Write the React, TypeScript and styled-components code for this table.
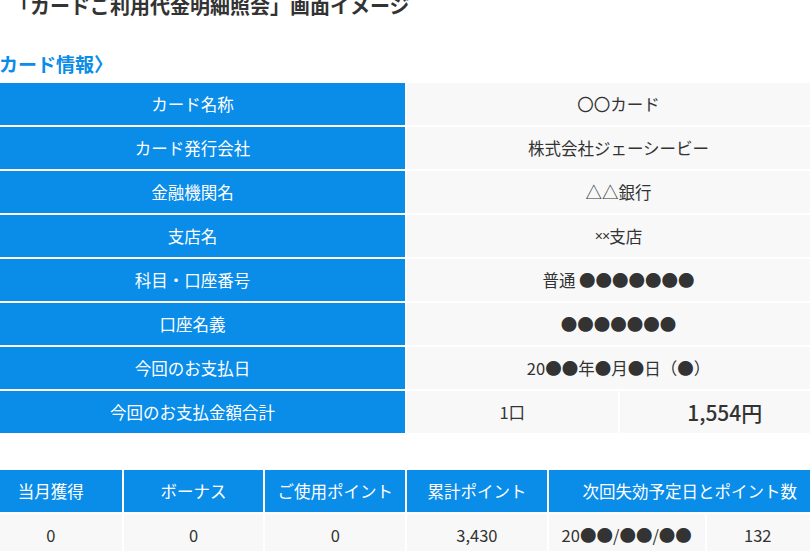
import * as React from 'react';
import styled, { createGlobalStyle } from 'styled-components';

const GlobalStyle = createGlobalStyle`
    html, body {
        margin: 0;
        padding: 0;
        background: #ffffff;
        overflow: hidden;
    }
    body {
        font-family: "Noto Sans CJK JP", "Noto Sans", sans-serif;
        color: #333333;
    }
`;

const BLUE = '#0a8ce9';
const GRAY = '#f8f8f8';

const pointHeads = ['当月獲得', 'ボーナス', 'ご使用ポイント', '累計ポイント'];
const pointValues = ['0', '0', '0', '3,430'];

export default function App() {
    const cardRows: [string, React.ReactNode][] = [
        ['カード名称', '〇〇カード'],
        ['カード発行会社', '株式会社ジェーシービー'],
        ['金融機関名', '△△銀行'],
        ['支店名', <><Narrow>××</Narrow>支店</>],
        ['科目・口座番号', '普通 ●●●●●●●'],
        ['口座名義', '●●●●●●●'],
        ['今回のお支払日', '20●●年●月●日（●）'],
    ];

    return (
        <Page>
            <GlobalStyle />
            <Title>「カードご利用代金明細照会」画面イメージ</Title>
            <SectionHead>〈カード情報〉</SectionHead>
            <InfoTable>
                {cardRows.map(([label, value]) => (
                    <React.Fragment key={label}>
                        <HeadCell>{label}</HeadCell>
                        <ValueCell>{value}</ValueCell>
                    </React.Fragment>
                ))}
                <HeadCell>今回のお支払金額合計</HeadCell>
                <SplitRow>
                    <ValueCell>1口</ValueCell>
                    <ValueCell $big>1,554円</ValueCell>
                </SplitRow>
            </InfoTable>
            <PointTable>
                {pointHeads.map(h => (
                    <HeadCell key={h}>{h}</HeadCell>
                ))}
                <HeadCell $span={2}>次回失効予定日とポイント数</HeadCell>
                {pointValues.map((v, i) => (
                    <ValueCell key={i}>{v}</ValueCell>
                ))}
                <ValueCell>20●●/●●/●●</ValueCell>
                <ValueCell $padRight={22}>132</ValueCell>
            </PointTable>
        </Page>
    );
}


/** styling */

const Page = styled.div`
    width: 850px;
    margin: -10px 0 0 -20px;
`;

const Title = styled.h1`
    margin: 0;
    padding-left: 30px;
    font-size: 20px;
    line-height: 31px;
    font-weight: 600;
    color: #333333;
    white-space: nowrap;
`;

const SectionHead = styled.h2`
    margin: 0;
    height: 30px;
    margin-top: 28px;
    font-size: 19px;
    line-height: 30px;
    font-weight: 700;
    color: ${BLUE};
    white-space: nowrap;
`;

const InfoTable = styled.div`
    display: grid;
    grid-template-columns: 425px 423px;
    grid-auto-rows: 42px;
    gap: 2px;
    margin-top: 4px;
`;

const PointTable = styled.div`
    display: grid;
    grid-template-columns: 141.7px 139.7px 139.7px 139.7px 156px 124px;
    grid-auto-rows: 42px;
    gap: 2px;
    margin-top: 37px;
`;

const HeadCell = styled.div<{ $span?: number }>`
    grid-column: span ${p => p.$span ?? 1};
    display: flex;
    align-items: center;
    justify-content: center;
    background: ${BLUE};
    color: #ffffff;
    font-size: 16.5px;
    white-space: nowrap;
`;

const ValueCell = styled.div<{ $big?: boolean; $padRight?: number }>`
    display: flex;
    align-items: center;
    justify-content: center;
    box-sizing: border-box;
    padding-right: ${p => p.$padRight ?? 0}px;
    background: ${GRAY};
    color: #333333;
    font-size: ${p => (p.$big ? '21px' : '16.5px')};
    font-weight: ${p => (p.$big ? 500 : 400)};
    white-space: nowrap;
`;

const Narrow = styled.span`
    font-family: "Liberation Sans", sans-serif;
    font-size: 14px;
    letter-spacing: -1px;
`;

const SplitRow = styled.div`
    display: grid;
    grid-template-columns: 1fr 1fr;
    gap: 2px;
`;
